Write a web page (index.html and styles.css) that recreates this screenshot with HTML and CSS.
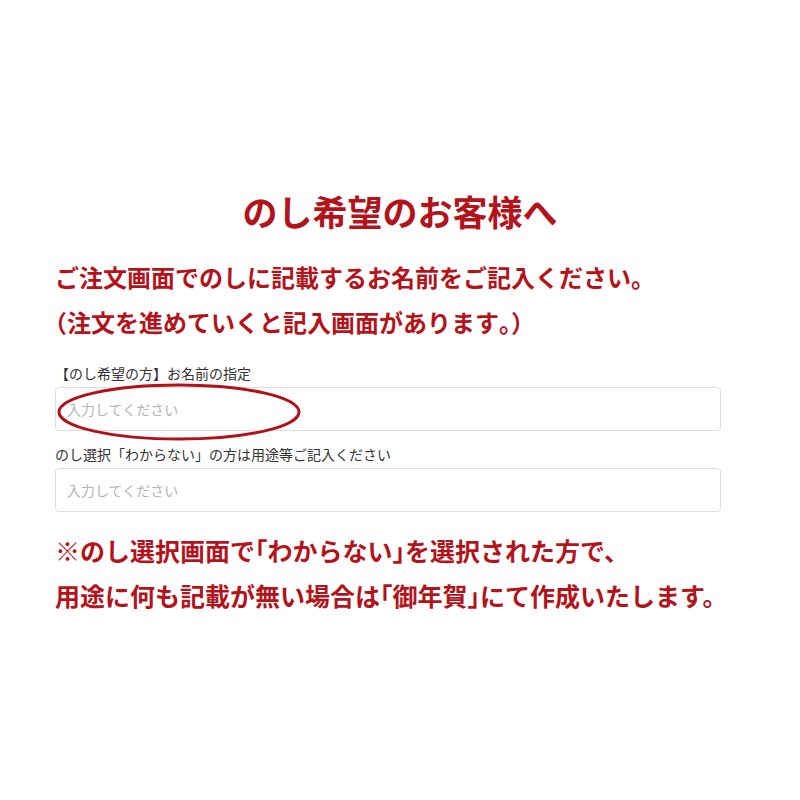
FILE: index.html
```html
<!DOCTYPE html>
<html lang="ja">
<head>
    <meta charset="UTF-8">
    <meta name="viewport" content="width=device-width, initial-scale=1.0">
    <title>のし希望のお客様へ</title>
    <link rel="stylesheet" href="styles.css">
</head>
<body>

    <h1 class="title">のし希望のお客様へ</h1>

    <div class="wrap">
        <p class="notice">
            ご注文画面でのしに記載するお名前をご記入ください。<br>
            <span class="half">（</span>注文を進めていくと記入画面があります<span class="half">。）</span>
        </p>

        <div class="form">
            <label class="label" for="noshiName">【のし希望の方】お名前の指定</label>
            <div class="field">
                <input id="noshiName" class="input" type="text" placeholder="入力してください">
                <!-- red circle marking the field -->
                <svg class="mark" width="246" height="58" viewBox="0 0 246 58">
                    <ellipse cx="123" cy="29" rx="120" ry="27" fill="none" stroke="#b0121c" stroke-width="3"/>
                </svg>
            </div>

            <label class="label" for="noshiUse">のし選択「わからない」の方は用途等ご記入ください</label>
            <div class="field">
                <input id="noshiUse" class="input" type="text" placeholder="入力してください">
            </div>
        </div>

        <p class="notice note-bottom">
            ※のし選択画面で<span class="half">「</span>わからない<span class="half">」</span>を選択された方で、<br>
            用途に何も記載が無い場合は<span class="half">「</span>御年賀<span class="half">」</span>にて作成いたします。
        </p>
    </div>

</body>
</html>
```

FILE: styles.css
```css
body {
    margin: 0;
    padding-top: 188px;
    background-color: #fff;
    font-family: "Noto Sans CJK JP", "Noto Sans", sans-serif;
    color: #333;
}

.title {
    margin: 0;
    text-align: center;
    font-size: 35px;
    line-height: 45px;
    font-weight: 700;
    color: #b3141c;
}

.wrap {
    width: 666px;
    margin: 21px 0 0 55px;
}

.notice {
    margin: 0;
    font-size: 24px;
    line-height: 45px;
    font-weight: 700;
    color: #b3141c;
    white-space: nowrap;
}

/* brackets and stops set at half width */
.half {
    font-feature-settings: "halt";
}

.form {
    margin-top: 19px;
}

.label {
    display: block;
    font-size: 14px;
    line-height: 20px;
    color: #333;
    margin-bottom: 4px;
}

.field {
    position: relative;
    margin-bottom: 13px;
}

.input {
    display: block;
    box-sizing: border-box;
    width: 666px;
    height: 44px;
    padding: 0 11px;
    border: 1px solid #ddd;
    border-radius: 4px;
    font-family: "Noto Sans CJK JP", "Noto Sans", sans-serif;
    font-size: 14px;
    color: #333;
    background-color: #fff;
}

.input::placeholder {
    color: #b4b4b4;
}

.mark {
    position: absolute;
    left: 1px;
    top: -4px;
    pointer-events: none;
}

.note-bottom {
    margin-top: 16px;
    font-size: 25px;
}
```
